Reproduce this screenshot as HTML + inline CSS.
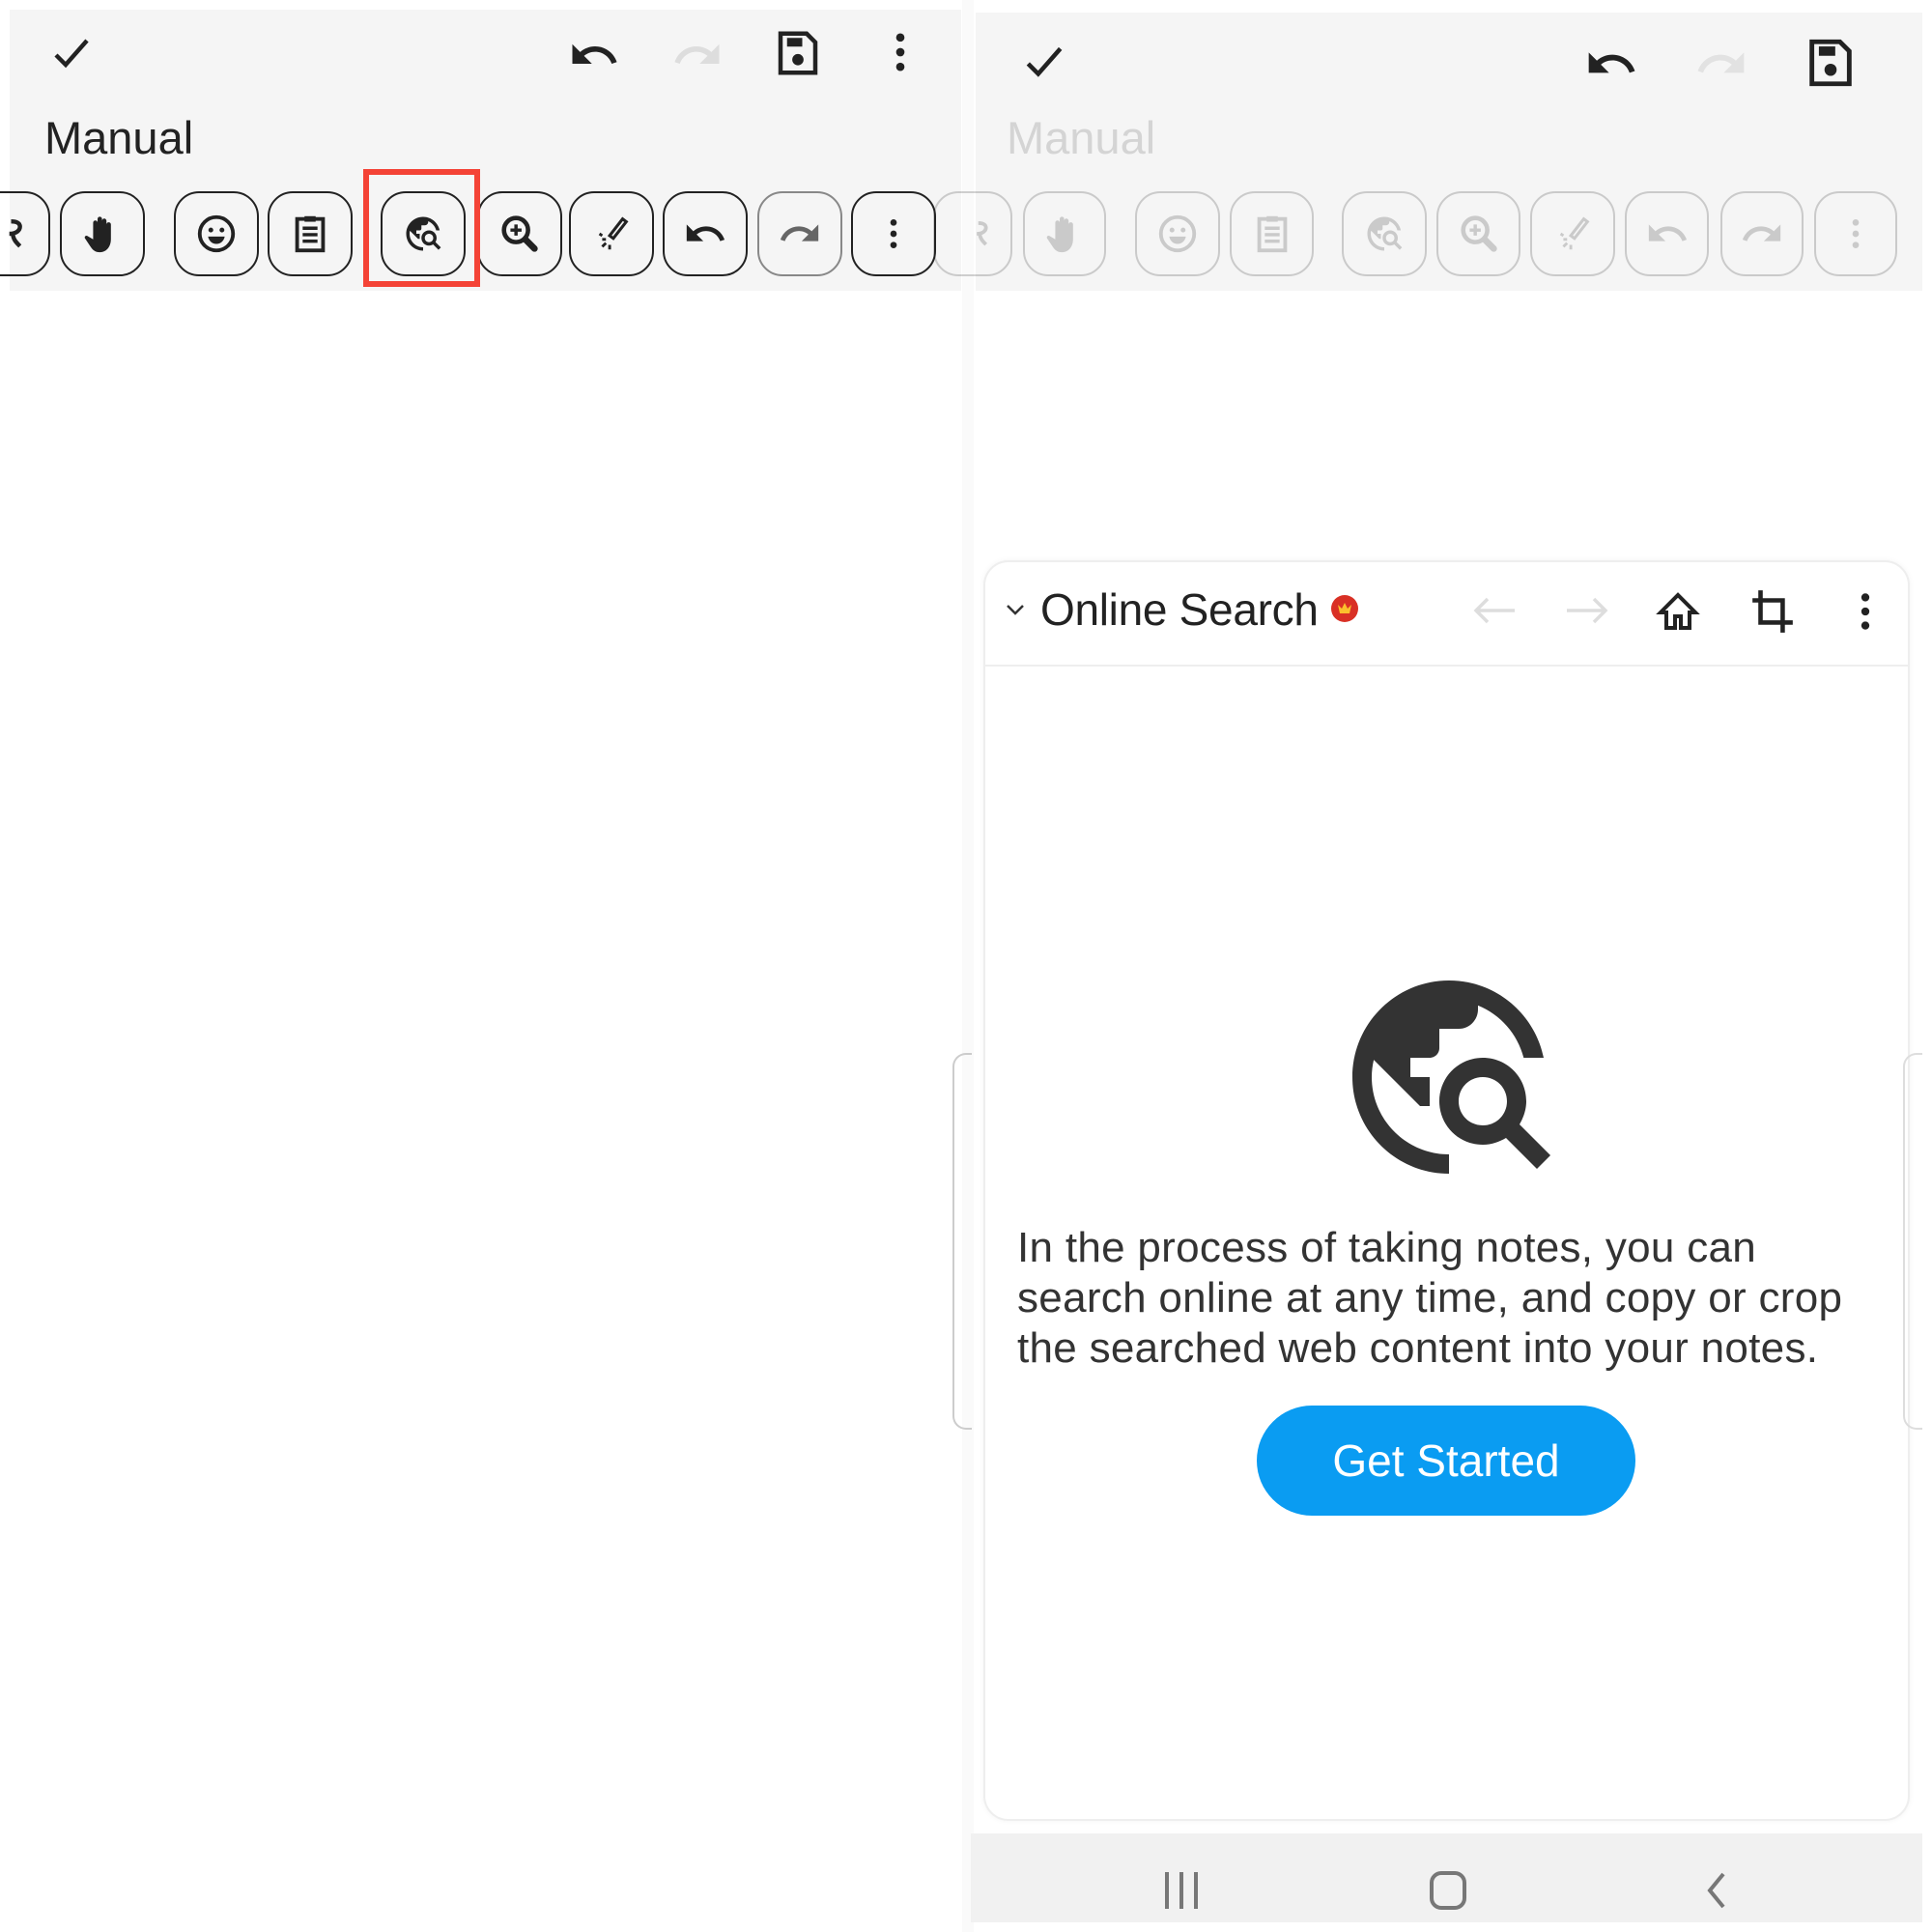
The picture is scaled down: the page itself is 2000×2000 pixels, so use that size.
<!DOCTYPE html>
<html><head><meta charset="utf-8"><style>
*{margin:0;padding:0;box-sizing:border-box}
body{width:2000px;height:2000px;background:#fff;position:relative;overflow:hidden;font-family:"Liberation Sans",sans-serif;color:#222}
.a{position:absolute}
.gray{background:#f5f5f5}
.btn{position:absolute;top:198px;height:88px;border:2.5px solid #222;border-radius:26px;display:flex;align-items:center;justify-content:center}
.btn svg{width:46px;height:46px}
.fade{opacity:.2}
.txt{font-size:44px;color:#333;white-space:nowrap;line-height:52px;letter-spacing:0.3px}
</style></head><body>
<svg width="0" height="0" style="position:absolute"><defs>
<symbol id="check" viewBox="0 0 24 24"><path d="M4 12.5l5 5L20 5" fill="none" stroke="#222" stroke-width="2.2"/></symbol>
<symbol id="undo" viewBox="0 0 24 24"><path d="M12.5 8c-2.65 0-5.050.99-6.9 2.6L2 7v9h9l-3.62-3.620c1.39-1.16 3.16-1.88 5.12-1.88 3.54 0 6.55 2.31 7.6 5.5l2.37-.78C21.08 11.03 17.15 8 12.5 8z" fill="#222"/></symbol>
<symbol id="redo" viewBox="0 0 24 24"><path d="M11.5 8c2.65 0 5.05.99 6.9 2.6L22 7v9h-9l3.62-3.62c-1.39-1.16-3.16-1.88-5.12-1.88-3.54 0-6.55 2.31-7.6 5.5l-2.37-.78C2.92 11.03 6.85 8 11.5 8z" fill="currentColor"/></symbol>
<symbol id="save" viewBox="0 0 24 24"><path d="M4 3h12l4 4v14H4z" fill="none" stroke="#222" stroke-width="2"/><rect x="7" y="5" width="7" height="4" fill="#222"/><circle cx="12" cy="15" r="2.6" fill="#222"/></symbol>
<symbol id="dots" viewBox="0 0 24 24"><circle cx="12" cy="5" r="2" fill="currentColor"/><circle cx="12" cy="12" r="2" fill="currentColor"/><circle cx="12" cy="19" r="2" fill="currentColor"/></symbol>
<symbol id="globe" viewBox="0 0 24 24"><path d="M19.3 16.9c.4-.7.7-1.5.7-2.4 0-2.5-2-4.5-4.5-4.5S11 12 11 14.5s2 4.5 4.5 4.5c.9 0 1.7-.3 2.4-.7l3.2 3.2 1.4-1.4-3.2-3.2zm-3.8.1c-1.4 0-2.5-1.1-2.5-2.5s1.1-2.5 2.5-2.5 2.5 1.1 2.5 2.5-1.1 2.5-2.5 2.5zM12 20v2C6.48 22 2 17.52 2 12S6.48 2 12 2c4.84 0 8.87 3.44 9.8 8h-2.070c-.64-2.46-2.4-4.47-4.73-5.41V5c0 1.1-.9 2-2 2h-2v2c0 .55-.45 1-1 1H8v2h2v3H9l-4.79-4.79C4.08 10.79 4 11.38 4 12c0 4.41 3.59 8 8 8z" fill="currentColor"/></symbol>
<symbol id="hand" viewBox="0 0 24 24"><path d="M7 12V6a1.2 1.2 0 012.4 0v5V4a1.2 1.2 0 012.4 0v7V5a1.2 1.2 0 012.4 0v6V7a1.2 1.2 0 012.4 0v8c0 4-2.5 7-6 7-2.5 0-3.8-1.2-5-3l-3-4.5c-.6-.9.6-2 1.5-1.2L7 15z" fill="currentColor"/></symbol>
<symbol id="smile" viewBox="0 0 24 24"><circle cx="12" cy="12" r="9" fill="none" stroke="currentColor" stroke-width="2"/><circle cx="9" cy="10" r="1.3" fill="currentColor"/><circle cx="15" cy="10" r="1.3" fill="currentColor"/><path d="M7.5 13.5h9c-.5 2.5-2.3 4-4.5 4s-4-1.5-4.5-4z" fill="currentColor"/></symbol>
<symbol id="clip" viewBox="0 0 24 24"><rect x="5" y="4" width="14" height="17" fill="none" stroke="currentColor" stroke-width="2"/><rect x="9" y="2.5" width="6" height="3" fill="currentColor"/><path d="M8 9h8M8 12.5h8M8 16h8" stroke="currentColor" stroke-width="1.8"/></symbol>
<symbol id="zoom" viewBox="0 0 24 24"><circle cx="10" cy="10" r="6.5" fill="none" stroke="currentColor" stroke-width="2.4"/><path d="M10 7v6M7 10h6" stroke="currentColor" stroke-width="1.8"/><path d="M15 15l5 5" stroke="currentColor" stroke-width="3.5" stroke-linecap="round"/></symbol>
<symbol id="laser" viewBox="0 0 24 24"><path d="M11 13l7-9 2 1.5-7 9z" fill="none" stroke="currentColor" stroke-width="1.6"/><path d="M9 15l-2 0M9 17l-2 2M11 18v2.5M7 13l-1.5-1" stroke="currentColor" stroke-width="1.5"/></symbol>
<symbol id="lasso" viewBox="0 0 24 24"><path d="M2 12c4 0 6-2 6-4s-2-3-5-3M4 12c0 3 2 5 4 7" fill="none" stroke="currentColor" stroke-width="2.4"/></symbol>
</defs></svg>

<!-- LEFT PANEL -->
<div class="a gray" style="left:10px;top:10px;width:985px;height:291px"></div>
<svg class="a" style="left:50px;top:32px;width:48px;height:48px"><use href="#check"/></svg>
<svg class="a" style="left:588px;top:30px;width:54px;height:54px"><use href="#undo"/></svg>
<svg class="a" style="left:695px;top:30px;width:54px;height:54px;color:#ddd"><use href="#redo"/></svg>
<svg class="a" style="left:799px;top:28px;width:54px;height:54px"><use href="#save"/></svg>
<svg class="a" style="left:906px;top:28px;width:52px;height:52px;color:#222"><use href="#dots"/></svg>
<div class="a" style="left:46px;top:115px;font-size:47px;color:#222">Manual</div>

<div style="position:absolute;left:0;top:0;color:#222">
<div class="btn" style="left:-36px;width:88px"><svg style="margin-left:40px"><use href="#lasso"/></svg></div>
<div class="btn" style="left:62px;width:88px"><svg><use href="#hand"/></svg></div>
<div class="btn" style="left:180px;width:88px"><svg><use href="#smile"/></svg></div>
<div class="btn" style="left:277px;width:88px"><svg><use href="#clip"/></svg></div>
<div class="btn" style="left:394px;width:88px"><svg style="width:42px;height:42px"><use href="#globe"/></svg></div>
<div class="btn" style="left:494px;width:88px"><svg><use href="#zoom"/></svg></div>
<div class="btn" style="left:589px;width:88px"><svg><use href="#laser"/></svg></div>
<div class="btn" style="left:686px;width:88px"><svg><use href="#undo"/></svg></div>
<div class="btn" style="left:784px;width:88px;border-color:#888;color:#666"><svg><use href="#redo"/></svg></div>
<div class="btn" style="left:881px;width:88px"><svg style="width:40px"><use href="#dots"/></svg></div>
</div>
<div class="a" style="left:376px;top:175px;width:121px;height:122px;border:6px solid #f44336"></div>

<!-- divider strip -->
<div class="a" style="left:996px;top:0;width:12px;height:2000px;background:#fafafa"></div>
<div class="a" style="left:986px;top:1090px;width:20px;height:390px;border:2px solid #ccc;border-right:none;border-radius:14px 0 0 14px"></div>

<!-- RIGHT PANEL -->
<div class="a gray" style="left:1010px;top:13px;width:980px;height:288px"></div>
<svg class="a" style="left:1056px;top:40px;width:50px;height:50px"><use href="#check"/></svg>
<svg class="a" style="left:1640px;top:38px;width:56px;height:56px"><use href="#undo"/></svg>
<svg class="a" style="left:1754px;top:38px;width:56px;height:56px;color:#e2e2e2"><use href="#redo"/></svg>
<svg class="a" style="left:1866px;top:36px;width:58px;height:58px"><use href="#save"/></svg>
<div class="fade" style="position:absolute;left:0;top:0;color:#222">
<div class="a" style="left:1042px;top:115px;font-size:47px;color:#555">Manual</div>
<div class="btn" style="left:966px;width:82px"><svg style="margin-left:40px"><use href="#lasso"/></svg></div>
<div class="btn" style="left:1059px;width:86px"><svg><use href="#hand"/></svg></div>
<div class="btn" style="left:1175px;width:88px"><svg><use href="#smile"/></svg></div>
<div class="btn" style="left:1273px;width:87px"><svg><use href="#clip"/></svg></div>
<div class="btn" style="left:1389px;width:88px"><svg style="width:42px;height:42px"><use href="#globe"/></svg></div>
<div class="btn" style="left:1487px;width:87px"><svg><use href="#zoom"/></svg></div>
<div class="btn" style="left:1584px;width:88px"><svg><use href="#laser"/></svg></div>
<div class="btn" style="left:1682px;width:87px"><svg><use href="#undo"/></svg></div>
<div class="btn" style="left:1781px;width:86px"><svg><use href="#redo"/></svg></div>
<div class="btn" style="left:1878px;width:86px"><svg style="width:40px"><use href="#dots"/></svg></div>
</div>

<!-- card -->
<div class="a" style="left:1018px;top:580px;width:959px;height:1305px;background:#fff;border:2px solid #eee;border-radius:26px;box-shadow:0 0 6px rgba(0,0,0,.05)"></div>
<div class="a" style="left:1020px;top:688px;width:955px;height:2px;background:#eee"></div>
<svg class="a" style="left:1040px;top:620px;width:22px;height:22px"><path d="M3 7l8 8 8-8" fill="none" stroke="#333" stroke-width="2.5"/></svg>
<div class="a" style="left:1077px;top:604px;font-size:46px;color:#222;letter-spacing:-0.3px">Online Search</div>
<svg class="a" style="left:1377px;top:615px;width:30px;height:30px" viewBox="0 0 30 30"><circle cx="15" cy="15" r="14" fill="#d93025"/><path d="M8 11l4 4 3-6 3 6 4-4-2 9H10z" fill="#fbc02d"/></svg>
<svg class="a" style="left:1522px;top:612px;width:50px;height:40px" viewBox="0 0 50 40"><path d="M46 20H6M18 8L6 20l12 12" fill="none" stroke="#ddd" stroke-width="3.5"/></svg>
<svg class="a" style="left:1618px;top:612px;width:50px;height:40px" viewBox="0 0 50 40"><path d="M4 20h40M32 8l12 12-12 12" fill="none" stroke="#ddd" stroke-width="3.5"/></svg>
<svg class="a" style="left:1713px;top:610px;width:48px;height:48px" viewBox="0 0 24 24"><path d="M3 12l9-9 9 9h-3v8h-4.5v-6h-3v6H6v-8z" fill="none" stroke="#222" stroke-width="2"/></svg>
<svg class="a" style="left:1810px;top:608px;width:50px;height:52px" viewBox="0 0 24 24"><path d="M6 1v16h16M2 6h15v16" fill="none" stroke="#222" stroke-width="2.2"/></svg>
<svg class="a" style="left:1906px;top:608px;width:50px;height:50px;color:#222"><use href="#dots"/></svg>

<svg class="a" style="left:1380px;top:995px;width:240px;height:240px;color:#333"><use href="#globe"/></svg>
<div class="a txt" style="left:1053px;top:1266px">In the process of taking notes, you can<br>search online at any time, and copy or crop<br>the searched web content into your notes.</div>
<div class="a" style="left:1301px;top:1455px;width:392px;height:114px;border-radius:57px;background:#0a9cf2;color:#fff;font-size:46px;display:flex;align-items:center;justify-content:center">Get Started</div>

<div class="a" style="left:1970px;top:1090px;width:20px;height:390px;border:2px solid #ddd;border-right:none;border-radius:14px 0 0 14px"></div>

<!-- nav bar -->
<div class="a" style="left:1005px;top:1898px;width:985px;height:92px;background:#f1f1f1"></div>
<div class="a" style="left:1206px;top:1938px;width:4px;height:38px;background:#777"></div>
<div class="a" style="left:1221px;top:1938px;width:4px;height:38px;background:#777"></div>
<div class="a" style="left:1236px;top:1938px;width:4px;height:38px;background:#777"></div>
<div class="a" style="left:1480px;top:1937px;width:38px;height:40px;border:4px solid #777;border-radius:12px"></div>
<svg class="a" style="left:1762px;top:1937px;width:28px;height:40px" viewBox="0 0 28 40"><path d="M22 3L8 20l14 17" fill="none" stroke="#777" stroke-width="4"/></svg>
</body></html>
